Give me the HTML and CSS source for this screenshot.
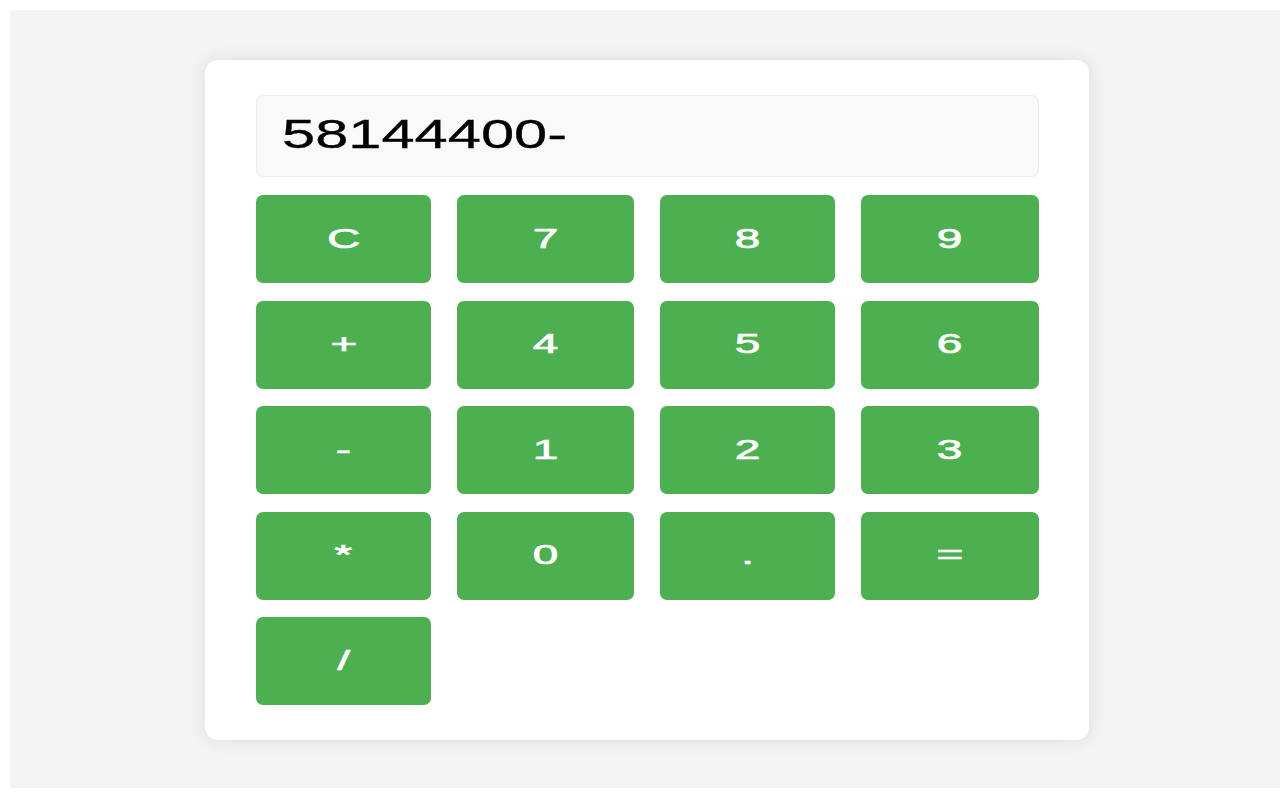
FILE: index.html
```html
<!DOCTYPE html>
<html lang="en">
<head>
<meta charset="utf-8">
<title>Calculator</title>
<link rel="stylesheet" href="styles.css">
</head>
<body>
<div class="page">
  <div class="calculator">
    <div class="display"><span class="display-text">58144400-</span></div>
    <div class="keys">
      <button class="key"><span class="label">C</span></button>
      <button class="key"><span class="label">7</span></button>
      <button class="key"><span class="label">8</span></button>
      <button class="key"><span class="label">9</span></button>
      <button class="key"><span class="label">+</span></button>
      <button class="key"><span class="label">4</span></button>
      <button class="key"><span class="label">5</span></button>
      <button class="key"><span class="label">6</span></button>
      <button class="key"><span class="label">-</span></button>
      <button class="key"><span class="label">1</span></button>
      <button class="key"><span class="label">2</span></button>
      <button class="key"><span class="label">3</span></button>
      <button class="key"><span class="label">*</span></button>
      <button class="key"><span class="label">0</span></button>
      <button class="key"><span class="label">.</span></button>
      <button class="key"><span class="label">=</span></button>
      <button class="key"><span class="label">/</span></button>
    </div>
  </div>
</div>
</body>
</html>
```

FILE: styles.css
```css
html, body {
  background: #ffffff;
}
body {
  margin: 10px 0 0 10px;
  font-family: "Liberation Sans", Arial, sans-serif;
}
.page {
  height: 778px;
  background: #f3f3f3;
  padding: 50px 0 0 195px;
  box-sizing: border-box;
  overflow: hidden;
}
.calculator {
  width: 884px;
  height: 680px;
  box-sizing: border-box;
  padding: 35px 50px 0 51px;
  background: #ffffff;
  border-radius: 13px;
  box-shadow: 0 0 18px rgba(0, 0, 0, 0.09);
}
.display {
  height: 82px;
  box-sizing: border-box;
  background: #f9f9f9;
  border: 1px solid #ececec;
  border-radius: 7px;
  display: flex;
  align-items: center;
  padding-left: 25px;
  margin-bottom: 18px;
}
.display-text {
  display: inline-block;
  font-size: 40px;
  color: #000;
  transform: scaleX(1.49);
  transform-origin: left center;
  margin-top: -3px;
  -webkit-text-stroke: 0.3px #000;
}
.keys {
  display: grid;
  grid-template-columns: 175px 177px 175px 178px;
  grid-auto-rows: 88px;
  column-gap: 26px;
  row-gap: 17.5px;
}
.key {
  border: none;
  margin: 0;
  padding: 0;
  background: #4caf50;
  color: #ffffff;
  border-radius: 7px;
  font-family: "Liberation Sans", Arial, sans-serif;
  font-size: 27px;
  display: flex;
  align-items: center;
  justify-content: center;
}
.label {
  display: inline-block;
  transform: scaleX(1.7);
  -webkit-text-stroke: 0.7px #ffffff;
}
```
